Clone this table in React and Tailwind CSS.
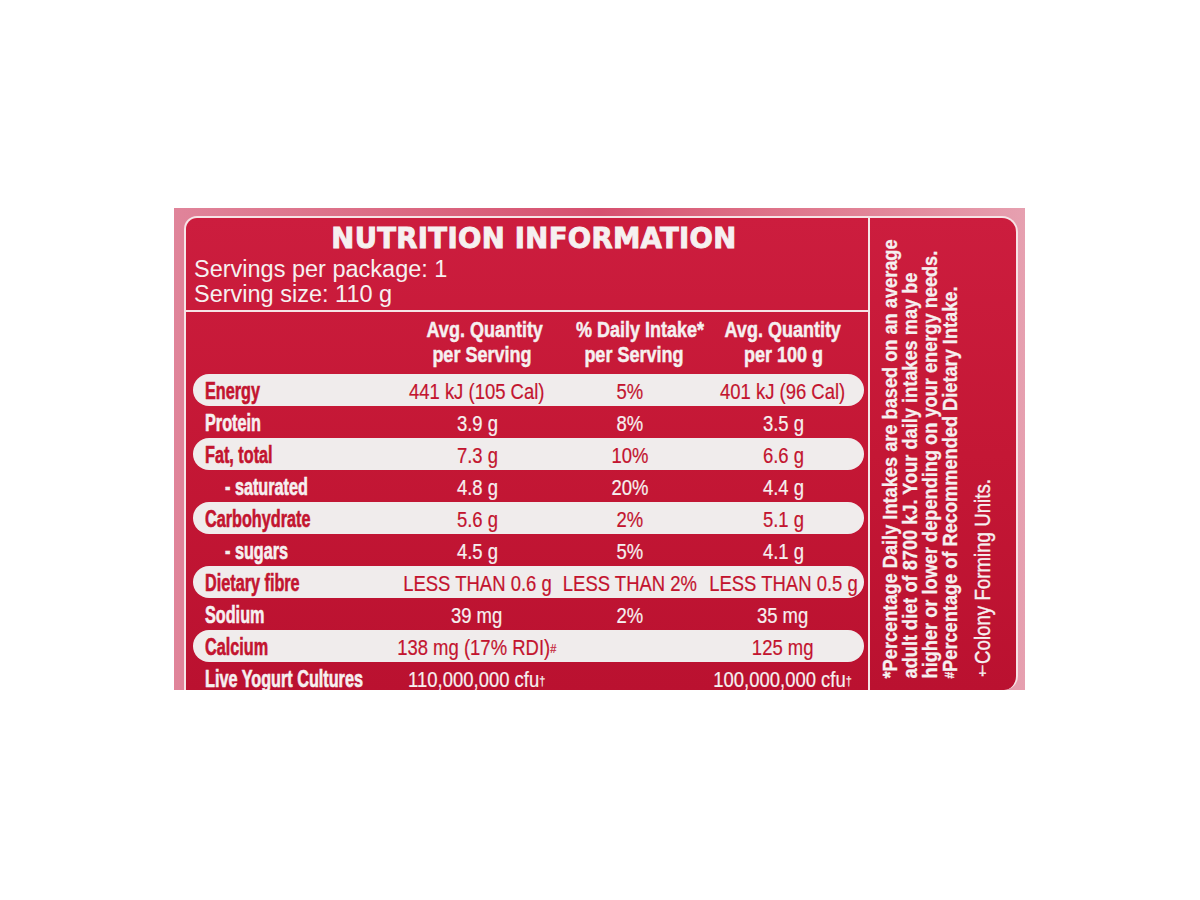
import React from "react";

const SANS = "font-['Liberation_Sans',Arial,sans-serif]";

const rows = [
  { label: "Energy", v1: "441 kJ (105 Cal)", v2: "5%", v3: "401 kJ (96 Cal)", pill: true },
  { label: "Protein", v1: "3.9 g", v2: "8%", v3: "3.5 g" },
  { label: "Fat, total", v1: "7.3 g", v2: "10%", v3: "6.6 g", pill: true },
  { label: "- saturated", v1: "4.8 g", v2: "20%", v3: "4.4 g", indent: true },
  { label: "Carbohydrate", v1: "5.6 g", v2: "2%", v3: "5.1 g", pill: true },
  { label: "- sugars", v1: "4.5 g", v2: "5%", v3: "4.1 g", indent: true },
  { label: "Dietary fibre", v1: "LESS THAN 0.6 g", v2: "LESS THAN 2%", v3: "LESS THAN 0.5 g", pill: true },
  { label: "Sodium", v1: "39 mg", v2: "2%", v3: "35 mg" },
  { label: "Calcium", v1: "138 mg (17% RDI)", s1: "#", v2: "", v3: "125 mg", pill: true },
  { label: "Live Yogurt Cultures", v1: "110,000,000 cfu", s1: "†", v2: "", v3: "100,000,000 cfu", s3: "†" },
];

function Cell({ text, sup }) {
  return (
    <div className="flex justify-center whitespace-nowrap">
      <span className="inline-block origin-center scale-x-[0.84]">
        {text}
        {sup ? <sup className="text-[13px] relative -top-[2px]">{sup}</sup> : null}
      </span>
    </div>
  );
}

function Row({ r }) {
  const base =
    "grid grid-cols-[209px_150px_156px_150px_1fr] h-[32px] pt-[3px] leading-[29px] ml-[7px] mr-[4px]";
  const cls = r.pill
    ? base + " bg-[#f0ecec] rounded-full text-[#c3142f] [-webkit-text-stroke:0.2px_#c3142f]"
    : base + " text-[#f6f0f0] [-webkit-text-stroke:0.2px_#f6f0f0]";
  return (
    <div className={cls}>
      <div
        className={
          "font-bold text-[23.5px] whitespace-nowrap [-webkit-text-stroke-width:0.6px] " +
          (r.indent ? "pl-[32px]" : "pl-[12px]")
        }
      >
        <span className="inline-block origin-left scale-x-[0.69]">{r.label}</span>
      </div>
      <div className="text-[22px]">
        <Cell text={r.v1} sup={r.s1} />
      </div>
      <div className="text-[22px]">
        <Cell text={r.v2} />
      </div>
      <div className="text-[22px]">
        <Cell text={r.v3} sup={r.s3} />
      </div>
      <div />
    </div>
  );
}

function H({ children }) {
  return (
    <div>
      <span className="inline-block origin-center scale-x-[0.8]">{children}</span>
    </div>
  );
}

export default function App() {
  return (
    <div className="w-[1200px] h-[900px] bg-white pt-[208px] pl-[174px]">
      <div className="w-[851px] h-[482px] overflow-hidden bg-linear-to-r from-[#e0849a] via-[#d6506f] to-[#e6a0b0]">
        <div className="ml-[10px] mr-[7px] mt-[8px] h-[474px] border-2 border-b-0 border-[#f6e4e6] rounded-tl-[13px] rounded-tr-[16px] rounded-br-[14px] overflow-hidden bg-linear-to-b from-[#cc1d3e] via-[#c41735] to-[#ba1130] flex">
          {/* Left: table */}
          <div className={"w-[684px] border-r-2 border-[#f6e4e6] text-[#f6f0f0] " + SANS}>
            <div className="h-[92px] border-b-2 border-[#f6e4e6] box-content">
              <div className="pt-[7px] pl-[14px] text-center font-['DejaVu_Sans',sans-serif] font-black text-[27.5px] leading-none tracking-[0.3px] whitespace-nowrap [-webkit-text-stroke:0.9px_#f6f0f0]">
                NUTRITION INFORMATION
              </div>
              <div className="mt-[4px] pl-[8px] text-[23.5px] leading-[25px]">
                <div>Servings per package: 1</div>
                <div>Serving size: 110 g</div>
              </div>
            </div>
            <div className="grid grid-cols-[209px_150px_156px_150px_1fr] ml-[7px] mr-[4px] pt-[5px] pb-[7px] font-bold text-[22.5px] leading-[25px] text-center whitespace-nowrap [-webkit-text-stroke:0.5px_#f6f0f0]">
              <div />
              <div className="pl-[10px]">
                <H>Avg. Quantity</H>
                <H>per Serving</H>
              </div>
              <div className="pl-[8px]">
                <H>% Daily Intake*</H>
                <H>per Serving</H>
              </div>
              <div>
                <H>Avg. Quantity</H>
                <H>per 100 g</H>
              </div>
              <div />
            </div>
            <div className="flex flex-col">
              {rows.map((r, i) => (
                <Row key={i} r={r} />
              ))}
            </div>
          </div>
          {/* Right: footnotes */}
          <div className={"flex-1 flex items-end pl-[10px] pb-[12px] text-[#f6f0f0] " + SANS}>
            <div className="[writing-mode:vertical-rl] rotate-180 whitespace-nowrap font-bold text-[20px] leading-[20px] [-webkit-text-stroke:0.3px_#f6f0f0]">
              <div className="origin-top scale-y-[0.91]">*Percentage Daily Intakes are based on an average</div>
              <div className="origin-top scale-y-[0.91]">adult diet of 8700 kJ. Your daily intakes may be</div>
              <div className="origin-top scale-y-[0.91]">higher or lower depending on your energy needs.</div>
              <div className="origin-top scale-y-[0.91]">
                <span className="text-[13px]">#</span>Percentage of Recommended Dietary Intake.
              </div>
              <div className="origin-top scale-y-[0.85] mr-[9px] font-normal text-[22px] leading-[28px] [-webkit-text-stroke:0.4px_#f6f0f0]">
                <span className="text-[15px]">†</span>Colony Forming Units.
              </div>
            </div>
          </div>
        </div>
      </div>
    </div>
  );
}
